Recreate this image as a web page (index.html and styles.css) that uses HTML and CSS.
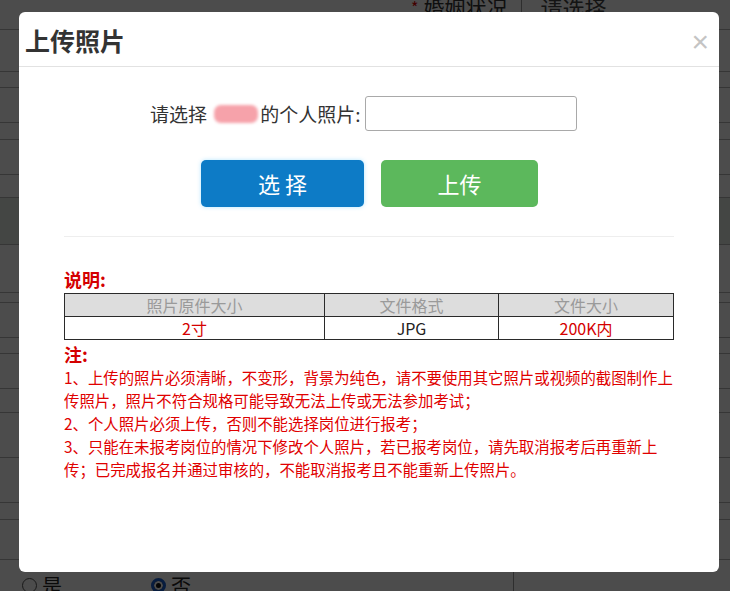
FILE: index.html
```html
<!DOCTYPE html>
<html lang="zh-CN">
<head>
<meta charset="utf-8">
<title>上传照片</title>
<link rel="stylesheet" href="styles.css">
</head>
<body>
<div class="page">
  <div class="row top-row h30">
    <span class="top-field"><span class="star">*</span><span class="top-label">婚姻状况</span><span class="top-sep"></span><span class="top-val">请选择</span></span>
  </div>
  <div class="row h42"></div>
  <div class="row h16"></div>
  <div class="row h35"></div>
  <div class="row h17"></div>
  <div class="row h35"></div>
  <div class="row h23"></div>
  <div class="row h47 hl"></div>
  <div class="row h48"></div>
  <div class="row h10"></div>
  <div class="row h35"></div>
  <div class="row h16"></div>
  <div class="row h35"></div>
  <div class="row h24"></div>
  <div class="row h45"></div>
  <div class="row h45"></div>
  <div class="row h17"></div>
  <div class="row h40"></div>
  <div class="row bottom-row">
    <span class="opt"><span class="radio"></span>是</span>
    <span class="opt opt-2"><span class="radio checked"></span>否</span>
    <span class="bottom-sep"></span>
  </div>
</div>
<div class="mask"></div>

<div class="dialog">
  <div class="dlg-head">
    <h3 class="dlg-title">上传照片</h3>
    <span class="dlg-close">×</span>
  </div>
  <div class="dlg-body">
    <div class="pick-row">
      <span class="pick-label">请选择 <span class="blur-name"></span>的个人照片:</span>
      <input class="pick-input" type="text">
    </div>
    <div class="btn-row">
      <button class="btn btn-blue">选 择</button>
      <button class="btn btn-green">上传</button>
    </div>
    <div class="divider"></div>
    <div class="note-title">说明:</div>
    <table class="spec">
      <tr class="spec-head"><td class="c1">照片原件大小</td><td class="c2">文件格式</td><td class="c3">文件大小</td></tr>
      <tr><td class="red">2寸</td><td>JPG</td><td class="red">200K内</td></tr>
    </table>
    <div class="note-title">注:</div>
    <div class="notes">
      <p class="note">1、上传的照片必须清晰，不变形，背景为纯色，请不要使用其它照片或视频的截图制作上<br>传照片，照片不符合规格可能导致无法上传或无法参加考试；</p>
      <p class="note">2、个人照片必须上传，否则不能选择岗位进行报考；</p>
      <p class="note">3、只能在未报考岗位的情况下修改个人照片，若已报考岗位，请先取消报考后再重新上<br>传；已完成报名并通过审核的，不能取消报考且不能重新上传照片。</p>
    </div>
  </div>
</div>
</body>
</html>
```

FILE: styles.css
```css
* { box-sizing: border-box; }
html, body {
  margin: 0;
  padding: 0;
  width: 730px;
  height: 591px;
  overflow: hidden;
  background: #fff;
  font-family: "Noto Sans CJK SC", "Noto Sans", sans-serif;
}

/* background page */
.page {
  width: 730px;
  height: 591px;
  background: #fff;
}
.row {
  border-bottom: 1px solid #b4b4b4;
  position: relative;
}
.hl { background: #e4ece4; }
.h10 { height: 10px; }
.h16 { height: 16px; }
.h17 { height: 17px; }
.h23 { height: 23px; }
.h24 { height: 24px; }
.h30 { height: 30px; }
.h35 { height: 35px; }
.h40 { height: 40px; }
.h42 { height: 42px; }
.h45 { height: 45px; }
.h47 { height: 47px; }
.h48 { height: 48px; }

.top-row {
  display: flex;
  align-items: flex-start;
  padding-left: 411px;
}
.top-field {
  display: flex;
  align-items: center;
  margin-top: -6px;
  font-size: 21px;
  line-height: 24px;
  color: #333;
}
.star { color: #d00; font-size: 16px; margin-right: 5px; }
.top-sep {
  width: 1px;
  height: 26px;
  background: #999;
  margin: 0 18px 0 14px;
}
.top-val { color: #444; font-size: 22px; }

.bottom-row {
  height: 31px;
  border-bottom: 0;
  display: flex;
  align-items: flex-start;
  padding-left: 22px;
  padding-top: 15px;
  font-size: 20px;
  line-height: 22px;
  color: #222;
}
.opt { display: flex; align-items: flex-start; }
.opt-2 { margin-left: 89px; }
.radio {
  width: 15px;
  height: 15px;
  border-radius: 50%;
  border: 1.5px solid #555;
  background: #fff;
  margin: 3px 5px 0 0;
}
.radio.checked {
  border: 3px solid #1a5fd0;
  background: #111;
  box-shadow: inset 0 0 0 2px #fff;
}
.bottom-sep {
  width: 1px;
  height: 50px;
  background: #999;
  margin-left: 322px;
  margin-top: -20px;
}

/* mask */
.mask {
  position: absolute;
  left: 0;
  top: 0;
  width: 730px;
  height: 591px;
  background: rgba(0, 0, 0, 0.7);
}

/* dialog */
.dialog {
  position: absolute;
  left: 19px;
  top: 12px;
  width: 700px;
  height: 560px;
  background: #fff;
  border-radius: 6px;
  overflow: hidden;
}
.dlg-head {
  height: 55px;
  border-bottom: 1px solid #e2e2e2;
  display: flex;
  align-items: center;
  justify-content: space-between;
  padding: 0 10px 0 6px;
}
.dlg-title {
  margin: 0;
  font-size: 25px;
  font-weight: 700;
  color: #333;
  line-height: 30px;
  margin-top: 2px;
}
.dlg-close {
  font-family: "Liberation Sans", Arial, sans-serif;
  font-size: 30px;
  line-height: 30px;
  color: #c4c4c4;
  margin-top: 6px;
}

.dlg-body {
  padding: 0 45px;
}
.pick-row {
  display: flex;
  align-items: center;
  margin-top: 29px;
  margin-left: 86px;
  height: 35px;
}
.pick-label {
  font-size: 19px;
  color: #333;
  line-height: 24px;
  display: flex;
  align-items: center;
  white-space: pre;
}
.blur-name {
  display: inline-block;
  width: 44px;
  height: 18px;
  border-radius: 7px;
  background: #f6a2aa;
  filter: blur(1.5px);
  margin: 0 2px 0 3px;
}
.pick-input {
  width: 212px;
  height: 35px;
  margin: 0 0 0 4px;
  border: 1px solid #a9a9a9;
  border-radius: 3px;
  background: #fff;
  padding: 0;
}

.btn-row {
  display: flex;
  gap: 17px;
  margin-top: 29px;
  margin-left: 137px;
}
.btn {
  height: 47px;
  border: 0;
  border-radius: 5px;
  color: #fff;
  font-family: "Noto Sans CJK SC", sans-serif;
  font-size: 22px;
  line-height: 47px;
  padding: 0;
}
.btn-blue {
  width: 163px;
  background: #0d7bc6;
  box-shadow: 0 0 4px rgba(90, 200, 255, 0.45);
}
.btn-green {
  width: 157px;
  background: #5cb85c;
}

.divider {
  height: 1px;
  background: #eeeeee;
  margin-top: 29px;
}

.note-title {
  color: #d40000;
  font-size: 18px;
  font-weight: 700;
  line-height: 24px;
  margin-top: 2px;
}
.divider + .note-title { margin-top: 30px; }

.spec {
  width: 610px;
  border-collapse: collapse;
  margin-top: 2px;
  font-size: 16px;
}
.spec td {
  border: 1px solid #2a2a2a;
  height: 23px;
  padding: 0;
  line-height: 21px;
  text-align: center;
  color: #222;
}
.spec .spec-head td {
  background: #dddddd;
  color: #9a9a9a;
}
.spec .c1 { width: 260px; }
.spec .c2 { width: 174px; }
.spec td.red { color: #d40000; }

.notes {
  width: 625px;
}
.note {
  margin: 0;
  color: #e00000;
  font-size: 15.4px;
  line-height: 23px;
  white-space: nowrap;
}
```
